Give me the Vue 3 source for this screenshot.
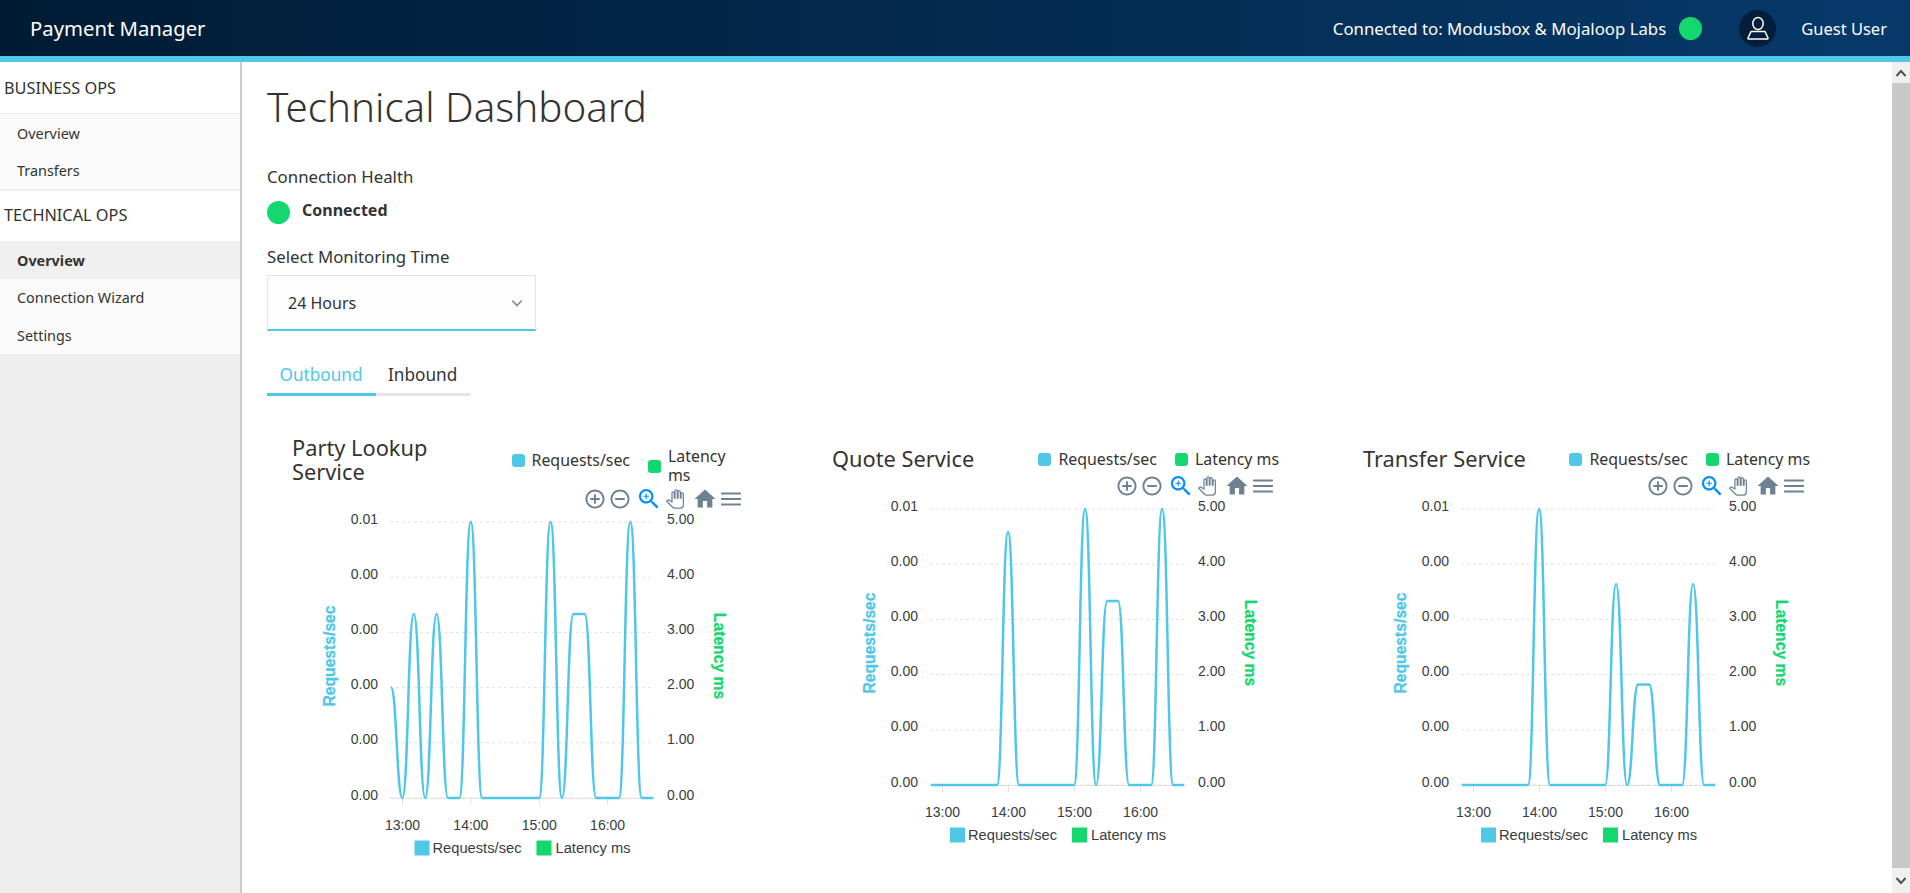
<template>
  <div class="page">
    <header class="topbar">
      <div class="topbar__brand">Payment Manager</div>
      <div class="topbar__connection">
        <span>Connected to: Modusbox &amp; Mojaloop Labs</span>
        <i class="dot" />
      </div>
      <div class="topbar__avatar">
        <svg width="24" height="24" viewBox="0 0 24 24" fill="none" stroke="#fff" stroke-width="1.5">
          <ellipse cx="12" cy="7.5" rx="5.2" ry="6" />
          <path d="M5 15.5h14l3 6.5c.2.6-.2 1-.8 1H2.800c-.6 0-1-.4-.8-1z" stroke-linejoin="round" />
        </svg>
      </div>
      <div class="topbar__user">Guest User</div>
    </header>

    <div class="body">
      <aside class="sidebar">
        <template v-for="section in menu" :key="section.title">
          <div class="sidebar__title">{{ section.title }}</div>
          <ul class="sidebar__list">
            <li
              v-for="item in section.items"
              :key="item.label"
              class="sidebar__item"
              :class="{ 'sidebar__item--active': item.active }"
            >
              {{ item.label }}
            </li>
          </ul>
        </template>
      </aside>

      <main class="content">
        <h1 class="content__title">Technical Dashboard</h1>

        <div class="field-label">Connection Health</div>
        <div class="health">
          <i class="dot" />
          <strong>Connected</strong>
        </div>

        <div class="field-label field-label--select">Select Monitoring Time</div>
        <div class="select">
          <span>24 Hours</span>
          <svg width="12" height="12" viewBox="0 0 14 14" fill="none" stroke="#8a8a8a" stroke-width="1.8">
            <path d="M1.500 4l5.500 6 5.500-6" />
          </svg>
        </div>

        <div class="tabs">
          <div class="tab tab--active">Outbound</div>
          <div class="tab">Inbound</div>
        </div>

        <div class="charts">
          <section
            v-for="chart in charts"
            :key="chart.title"
            class="chart"
            :class="{ 'chart--tall': chart.tall }"
          >
            <div class="chart__header">
              <h2 class="chart__title">{{ chart.title }}</h2>
              <div class="chart__legend">
                <div class="legend-item">
                  <i class="legend-item__mark legend-item__mark--blue" />
                  <span>Requests/sec</span>
                </div>
                <div class="legend-item legend-item--latency">
                  <i class="legend-item__mark legend-item__mark--green" />
                  <span>Latency ms</span>
                </div>
              </div>
            </div>

            <svg class="chart__plot" width="470" height="380">
              <!-- toolbar -->
              <g
                v-for="icon in chart.icons"
                :key="icon.name"
                :transform="`translate(${icon.x} 14) scale(${icon.scale}) translate(-12 -12)`"
              >
                <path
                  :d="icon.d"
                  :fill="icon.fill"
                  :stroke="icon.stroke"
                  :stroke-width="icon.strokeWidth"
                />
                <path v-if="icon.d2" :d="icon.d2" :fill="icon.fill" />
              </g>

              <!-- grid -->
              <line
                v-for="(row, i) in rows"
                :key="i"
                :x1="plotLeft"
                :x2="plotLeft + chart.plotWidth"
                :y1="row.y"
                :y2="row.y"
                stroke="#e0e0e0"
                stroke-dasharray="3 3"
              />
              <line
                :x1="plotLeft"
                :x2="plotLeft + chart.plotWidth + 2"
                :y1="baseline + 0.5"
                :y2="baseline + 0.5"
                stroke="#e0e0e0"
              />

              <!-- axes -->
              <text
                v-for="row in rows"
                :key="row.left + row.y"
                class="tick"
                :x="plotLeft - 12"
                :y="row.y + 1.5"
                text-anchor="end"
              >{{ row.left }}</text>
              <text
                v-for="row in rows"
                :key="row.right"
                class="tick"
                :x="plotLeft + chart.plotWidth + 14"
                :y="row.y + 1.5"
              >{{ row.right }}</text>
              <g v-for="tick in chart.ticks" :key="tick.label">
                <line :x1="tick.x" :x2="tick.x" :y1="baseline" :y2="baseline + 7" stroke="#e0e0e0" />
                <text class="tick" :x="tick.x" y="345" text-anchor="middle">{{ tick.label }}</text>
              </g>

              <text
                class="axis-title axis-title--blue"
                :transform="`translate(37 171) rotate(-90)`"
                text-anchor="middle"
                dominant-baseline="central"
              >Requests/sec</text>
              <text
                class="axis-title axis-title--green"
                :transform="`translate(${plotLeft + chart.plotWidth + 66} 171) rotate(90)`"
                text-anchor="middle"
                dominant-baseline="central"
              >Latency ms</text>

              <path :d="chart.line" fill="none" stroke="#4fc7e7" stroke-width="2.5" />

              <!-- bottom legend -->
              <g :transform="`translate(${plotLeft + chart.plotWidth / 2 + 1} 0)`">
                <rect x="-108" y="355.500" width="15" height="15" fill="#4fc7e7" />
                <text class="bottom-legend" x="-90" y="368">Requests/sec</text>
                <rect x="14" y="355.500" width="15" height="15" fill="#14d76f" />
                <text class="bottom-legend" x="33" y="368">Latency ms</text>
              </g>
            </svg>
          </section>
        </div>
      </main>

      <div class="scrollbar">
        <div class="scrollbar__btn">
          <svg width="12" height="8" viewBox="0 0 12 8" fill="none" stroke="#505050" stroke-width="2"><path d="M1.500 7L6 2l4.500 5" /></svg>
        </div>
        <div class="scrollbar__thumb" />
        <div class="scrollbar__btn scrollbar__btn--down">
          <svg width="12" height="8" viewBox="0 0 12 8" fill="none" stroke="#505050" stroke-width="2"><path d="M1.500 1L6 6l4.500-5" /></svg>
        </div>
      </div>
    </div>
  </div>
</template>

<script setup>
const menu = [
  {
    title: 'BUSINESS OPS',
    items: [{ label: 'Overview' }, { label: 'Transfers' }]
  },
  {
    title: 'TECHNICAL OPS',
    items: [{ label: 'Overview', active: true }, { label: 'Connection Wizard' }, { label: 'Settings' }]
  }
]

const plotLeft = 98
const baseline = 313
const rowGap = 55.2

const leftLabels = ['0.01', '0.00', '0.00', '0.00', '0.00', '0.00']
const rightLabels = ['5.00', '4.00', '3.00', '2.00', '1.00', '0.00']
const rows = leftLabels.map((left, i) => ({
  left,
  right: rightLabels[i],
  y: baseline - rowGap * (5 - i)
}))

// one value per 10 minutes, from 12:50 to 16:40
function series(peaks, first = 0) {
  const values = new Array(24).fill(0)
  values[0] = first
  Object.entries(peaks).forEach(([i, v]) => {
    values[i] = v
  })
  return values
}

function buildLine(values, plotWidth) {
  const hour = plotWidth * 0.26
  const step = hour / 6
  const start = plotLeft + 1
  const pts = values.map((v, i) => [start + i * step, baseline - v * rowGap * 5])
  let d = `M${pts[0][0]} ${pts[0][1]}`
  for (let i = 1; i < pts.length; i++) {
    const [x0, y0] = pts[i - 1]
    const [x1, y1] = pts[i]
    const c = (x1 - x0) * 0.5
    d += ` C${x0 + c} ${y0} ${x1 - c} ${y1} ${x1} ${y1}`
  }
  return d
}

const circle = 'M12 2C6.480 2 2 6.480 2 12s4.480 10 10 10 10-4.480 10-10S17.520 2 12 2zm0 18c-4.410 0-8-3.590-8-8s3.590-8 8-8 8 3.590 8 8-3.590 8-8 8z'
const iconShapes = [
  { name: 'plus', offset: -56, scale: 0.95, fill: '#6e8192', d: 'M13 7h-2v4H7v2h4v4h2v-4h4v-2h-4V7z' + circle },
  { name: 'minus', offset: -31, scale: 0.95, fill: '#6e8192', d: 'M7 11v2h10v-2H7z' + circle },
  {
    name: 'zoom',
    offset: -2,
    scale: 1.12,
    fill: '#008ffb',
    d: 'M15.500 14h-.79l-.28-.27C15.410 12.590 16 11.110 16 9.500 16 5.910 13.090 3 9.500 3S3 5.910 3 9.500 5.910 16 9.500 16c1.610 0 3.090-.59 4.230-1.570l.27.28v.79l5 4.990L20.490 19l-4.990-5zm-6 0C7.010 14 5 11.990 5 9.500S7.010 5 9.500 5 14 7.010 14 9.500 11.990 14 9.500 14z',
    d2: 'M12 10h-2v2H9v-2H7V9h2V7h1v2h2v1z'
  },
  {
    name: 'pan',
    offset: 24,
    scale: 0.76,
    fill: '#fff',
    stroke: '#6e8192',
    strokeWidth: 1.6,
    d: 'M23 5.500V20c0 2.200-1.800 4-4 4h-7.300c-1.080 0-2.100-.43-2.850-1.190L1 14.830s1.260-1.230 1.300-1.250c.22-.19.49-.29.79-.29.22 0 .42.06.6.16.04.01 4.310 2.460 4.310 2.460V4c0-.83.67-1.500 1.500-1.500S11 3.170 11 4v7h1V1.500c0-.83.67-1.500 1.500-1.500S15 .67 15 1.500V11h1V2.500c0-.83.67-1.500 1.500-1.500s1.500.67 1.500 1.500V11h1V5.500c0-.83.67-1.500 1.500-1.500s1.500.67 1.500 1.500z'
  },
  { name: 'home', offset: 54, scale: 1.05, fill: '#6e8192', d: 'M10 20v-6h4v6h5v-8h3L12 3 2 12h3v8z' },
  { name: 'menu', offset: 80, scale: 1.1, fill: '#6e8192', d: 'M3 18h18v-2H3v2zm0-5h18v-2H3v2zm0-7v2h18V6H3z' }
]

function buildChart(title, plotWidth, values, tall = false) {
  const hour = plotWidth * 0.26
  const plotRight = plotLeft + plotWidth
  return {
    title,
    tall,
    plotWidth,
    line: buildLine(values, plotWidth),
    ticks: ['13:00', '14:00', '15:00', '16:00'].map((label, i) => ({
      label,
      x: plotLeft + 12.5 + i * hour
    })),
    icons: iconShapes.map(icon => ({ ...icon, x: plotRight + icon.offset - (tall ? 2 : 1) }))
  }
}

const charts = [
  buildChart(
    'Party Lookup Service',
    263,
    series({ 2: 0.667, 4: 0.667, 7: 1, 14: 1, 16: 0.667, 17: 0.667, 21: 1 }, 0.4),
    true
  ),
  buildChart('Quote Service', 254, series({ 7: 0.917, 14: 1, 16: 0.667, 17: 0.667, 21: 1 })),
  buildChart('Transfer Service', 254, series({ 7: 1, 14: 0.728, 16: 0.364, 17: 0.364, 21: 0.728 }))
]
</script>

<style>
html,
body {
  margin: 0;
  height: 100%;
  overflow: hidden;
}
</style>

<style scoped>
.page {
  height: 893px;
  display: flex;
  flex-direction: column;
  font-family: "Noto Sans", sans-serif;
  color: #333;
  background: #fff;
}

.dot {
  display: block;
  width: 23px;
  height: 23px;
  border-radius: 50%;
  background: #14d76f;
}

.topbar {
  height: 56px;
  flex: none;
  display: flex;
  align-items: center;
  border-bottom: 6px solid #4fc7e7;
  background: linear-gradient(90deg, #011b34, #06396a);
  color: #fff;
}

.topbar__brand {
  margin-left: 30px;
  font-size: 20.3px;
}

.topbar__connection {
  margin-left: auto;
  display: flex;
  align-items: center;
  gap: 13px;
  font-size: 16.8px;
}

.topbar__avatar {
  width: 37px;
  height: 37px;
  margin-left: 37px;
  display: flex;
  align-items: center;
  justify-content: center;
  border-radius: 50%;
  background: #031e3b;
}

.topbar__user {
  margin: 0 23px 0 25px;
  font-size: 16.5px;
}

.body {
  flex: 1;
  display: flex;
  min-height: 0;
}

.sidebar {
  width: 240px;
  flex: none;
  border-right: 2px solid #ccc;
  background: #eee;
}

.sidebar__title {
  height: 50px;
  padding: 0 0 2px 4px;
  box-sizing: border-box;
  display: flex;
  align-items: center;
  font-size: 16.3px;
  background: #fff;
}

.sidebar__title:first-child {
  height: 51px;
  padding-bottom: 0;
}

.sidebar__list {
  margin: 0;
  padding: 0;
  list-style: none;
  background: #fafafa;
}

.sidebar__list:first-of-type {
  border-top: 1px solid #f0f0f0;
  border-bottom: 2px solid #eee;
}

.sidebar__item {
  height: 37.5px;
  padding: 1px 0 0 17px;
  box-sizing: border-box;
  display: flex;
  align-items: center;
  font-size: 14.4px;
}

.sidebar__item--active {
  background: #f0f0f0;
  font-weight: 700;
}

.content {
  flex: 1;
  min-width: 0;
  padding: 21px 0 0 25px;
  overflow: hidden;
}

.content__title {
  margin: 0 0 36px;
  font-size: 40.3px;
  line-height: 48px;
  font-weight: 300;
  color: #333;
}

.field-label {
  font-size: 16.8px;
  line-height: 20px;
}

.field-label--select {
  margin-top: 24px;
}

.health {
  margin-top: 14px;
  height: 22px;
  display: flex;
  align-items: center;
  gap: 12px;
  font-size: 16px;
}

.health strong {
  margin-bottom: 4px;
}

.select {
  width: 269px;
  height: 56px;
  margin-top: 8px;
  padding: 0 12px 0 20px;
  box-sizing: border-box;
  display: flex;
  align-items: center;
  justify-content: space-between;
  font-size: 16px;
  background: #fdfdfd;
  border: 1px solid #e4e4e4;
  border-bottom: 2px solid #4fc7e7;
}

.tabs {
  margin-top: 27px;
  display: flex;
}

.tab {
  padding: 0 13px 2px 12.5px;
  height: 33px;
  display: flex;
  align-items: center;
  font-size: 17.2px;
  border-bottom: 3px solid #e4e4e4;
}

.tab--active {
  color: #4fc7e7;
  border-bottom-color: #4fc7e7;
}

.charts {
  margin: 34px 0 0 25px;
  display: grid;
  grid-template-columns: 540px 531px 1fr;
}

.chart {
  padding-top: 17px;
}

.chart--tall {
  padding-top: 5px;
}

.chart__header {
  width: 447px;
  display: flex;
  align-items: center;
  justify-content: space-between;
}

.chart--tall .chart__header {
  width: 435px;
}

.chart__title {
  margin: 0;
  padding-bottom: 1px;
  font-size: 21.8px;
  line-height: 24px;
  font-weight: 400;
}

.chart--tall .chart__title {
  width: 160px;
}

.chart__legend {
  display: flex;
  align-items: center;
  gap: 18px;
}

.legend-item {
  display: flex;
  align-items: center;
  gap: 7px;
  font-size: 15.9px;
  line-height: 19px;
}

.chart--tall .legend-item--latency {
  width: 79px;
  margin-top: 12px;
}

.legend-item__mark {
  width: 13px;
  height: 13px;
  flex: none;
  border-radius: 3px;
}

.legend-item__mark--blue {
  background: #4fc7e7;
}

.legend-item__mark--green {
  background: #14d76f;
}

.chart__plot {
  display: block;
}

.tick {
  font-family: "Liberation Sans", Arial, sans-serif;
  font-size: 14px;
  fill: #373d3f;
}

.bottom-legend {
  font-family: "Liberation Sans", Arial, sans-serif;
  font-size: 14.7px;
  fill: #373d3f;
}

.axis-title {
  font-family: "Liberation Sans", Arial, sans-serif;
  font-size: 15.7px;
  font-weight: 700;
  stroke-width: 0.3px;
}

.axis-title--blue {
  fill: #4fc7e7;
  stroke: #4fc7e7;
}

.axis-title--green {
  fill: #14d76f;
  stroke: #14d76f;
}

.scrollbar {
  width: 18px;
  flex: none;
  display: flex;
  flex-direction: column;
  background: #f0f0f0;
}

.scrollbar__btn {
  height: 21px;
  flex: none;
  display: flex;
  align-items: center;
  justify-content: center;
}

.scrollbar__btn--down {
  height: 25px;
}

.scrollbar__thumb {
  flex: 1;
  background: #c8c8c8;
}
</style>
